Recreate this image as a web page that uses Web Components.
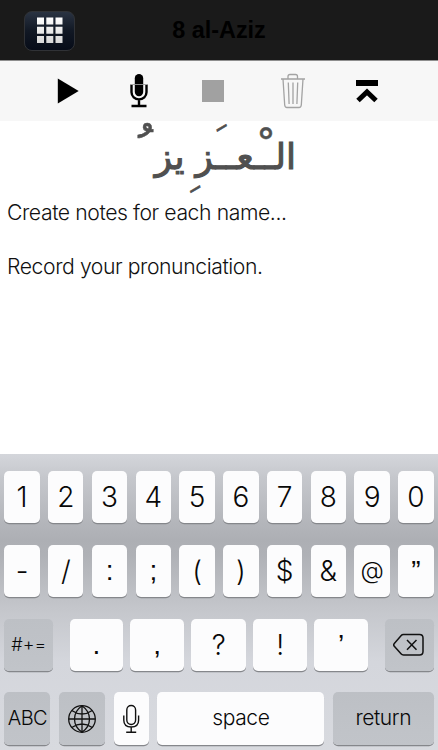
<!DOCTYPE html>
<html lang="en">
<head>
<meta charset="utf-8">
<title>8 al-Aziz</title>
<style>
html,body{margin:0;height:100%;overflow:hidden;background:#fff}
body{font-family:Inter,"Liberation Sans",sans-serif}
</style>
</head>
<body>
<name-app></name-app>
<script>
const define = (tag, html) => customElements.define(tag, class extends HTMLElement {
  constructor() {
    super();
    const t = document.createElement('template');
    t.innerHTML = html;
    this.attachShadow({mode: 'open'}).append(t.content.cloneNode(true));
  }
});

define('nav-header', `
<style>
:host{display:grid;grid-template-columns:100px 1fr 100px;align-items:center;height:60px;background:#1a1a1a;border-bottom:1px solid #8e8e8e;box-sizing:content-box}
.grid{margin-left:24px;width:49px;height:38px;border:1.5px solid #303236;border-radius:8px;background:linear-gradient(#2a3342,#111824 50%,#070c18);display:grid;place-items:center}
h1{margin:0;text-align:center;font:700 23.400px/61px "Liberation Sans",sans-serif;color:#000;white-space:nowrap}
</style>
<div class="grid"><svg width="28" height="28" viewBox="0 0 28 28"><defs><linearGradient id="g" x2="0" y2="1"><stop stop-color="#fff"/><stop offset="1" stop-color="#d8d8d8"/></linearGradient></defs><g fill="url(#g)"><path d="M1 .5h7v7H1zM10.300 .5h7v7h-7zM19.500 .5h7v7h-7zM1 9.800h7v7H1zM10.300 9.800h7v7h-7zM19.500 9.800h7v7h-7zM1 19h7v7H1zM10.300 19h7v7h-7zM19.500 19h7v7h-7z"/></g></svg></div>
<h1><slot></slot></h1>`);

define('audio-toolbar', `
<style>
:host{display:grid;grid-template-columns:32px 71.500px 70px 79.500px 79px 69.500px;height:59.500px;background:#f7f7f7;align-items:center;justify-items:center}
svg{display:block}
</style>
<span></span>
<svg width="22" height="26" viewBox="0 0 22 26"><path d="M.8 .5 21.700 13 .8 25.500z"/></svg>
<svg width="18" height="35" viewBox="0 0 18 35"><path d="M4.800 5.200a4.200 4.200 0 0 1 8.400 0V19a4.200 4.200 0 0 1-8.400 0z"/><path d="M1.500 12v7.300a7.500 7.100 0 0 0 15 0V12M9 26v7M1.500 33h15" fill="none" stroke="#000" stroke-width="2.400"/><path d="M0 11.500h18" stroke="#999" stroke-width=".9"/></svg>
<svg width="22" height="22" viewBox="0 0 22 22"><path fill="#a1a1a1" d="M0 0h22v22H0z"/></svg>
<svg width="26" height="36" viewBox="0 0 26 36" fill="none" stroke="#a3a3a3" stroke-width="1.300"><path d="M1 6h24M8 6V3.500Q8 1.500 10 1.500h5.500q2 0 2 2V6M3 6l1.700 26q.2 2.500 2.300 2.500h12q2.100 0 2.300-2.500L23 6M8.300 9.500l.8 21.500M13 9.500V31M17.700 9.500l-.8 21.500"/></svg>
<svg width="22" height="24" viewBox="0 0 22 24"><path d="M0 1h22v6H0z"/><path d="M2 21.500 11 13l9 8.500" fill="none" stroke="#000" stroke-width="5"/></svg>`);

define('arabic-name', `
<style>
:host{display:flex;gap:11px;position:relative;height:79px;margin-bottom:-27px;padding-right:142px;font:36px/72px "DejaVu Sans",sans-serif;color:#505050;white-space:nowrap;direction:rtl;-webkit-text-stroke:1.100px #505050}
i{position:absolute;font-style:normal;line-height:60px;font-size:44px;-webkit-text-stroke:.5px #505050}
.slant{font-size:38px;transform:rotate(-18deg)}
</style><span>الــعــز</span><span>يز</span>
<i style="left:255px;top:0">&nbsp;ْ</i><i class="slant" style="left:216px;top:-11px">&nbsp;َ</i><i class="slant" style="left:181px;top:24px">&nbsp;ِ</i><i style="left:132px;top:1px;font-size:54px">&nbsp;ُ</i>`);

define('note-text', `
<style>
:host{display:block;flex:1;padding:0 7px;font:300 21.200px/26.700px Inter,"Liberation Sans",sans-serif;letter-spacing:-.42px;color:#111;white-space:pre}
p{margin:0 0 26.700px}
</style><p>Create notes for each name...</p><p>Record your pronunciation.</p>`);

define('key-cap', `
<style>
:host{display:flex;align-items:center;justify-content:center;box-sizing:border-box;min-width:0;background:#fcfcfd;border-radius:5px;box-shadow:0 1.300px 0 #85878b;color:#080808;font-size:28px;font-weight:300;white-space:nowrap}
:host([dark]){background:linear-gradient(#bdc0c5,#c1c4c9)}
:host([small]){font-size:21px;letter-spacing:-.4px;line-height:24px;padding-bottom:2px}
:host([tiny]){font-size:18px}
:host([punct]){font-family:"Liberation Sans",sans-serif}
::slotted(svg){display:block}
</style><slot></slot>`);

define('key-row', `
<style>
:host{display:grid;height:52.300px;grid-template-columns:repeat(10,35.400px);column-gap:8.380px}
:host([kind=marks]){column-gap:7px;grid-template-columns:49px 62.600px 54.500px 54.500px 54.500px 53.500px 59px;justify-content:start}
:host([kind=bottom]){grid-template-columns:46.200px 46.200px 35.300px 166.800px 101px;column-gap:8.500px}
::slotted(.first){margin-left:9.600px}
::slotted(.last){margin-left:10px}
</style><slot></slot>`);

define('key-board', `
<style>
:host{display:flex;flex-direction:column;gap:21.500px;box-sizing:border-box;height:296px;padding:17px 4px 0 4.300px;background:linear-gradient(#d4d6db,#c5c7cc 8%,#adafb4 29%,#afb1b6 34%,#c5c7cc 53%,#d4d6dc 70%,#d8dadf)}
</style>
<key-row><key-cap>1</key-cap><key-cap>2</key-cap><key-cap>3</key-cap><key-cap>4</key-cap><key-cap>5</key-cap><key-cap>6</key-cap><key-cap>7</key-cap><key-cap>8</key-cap><key-cap>9</key-cap><key-cap>0</key-cap></key-row>
<key-row><key-cap>-</key-cap><key-cap>/</key-cap><key-cap punct>:</key-cap><key-cap punct>;</key-cap><key-cap>(</key-cap><key-cap>)</key-cap><key-cap>$</key-cap><key-cap>&amp;</key-cap><key-cap style="font-size:24px">@</key-cap><key-cap punct>”</key-cap></key-row>
<key-row kind="marks"><key-cap dark tiny>#+=</key-cap><key-cap punct class="first">.</key-cap><key-cap punct>,</key-cap><key-cap>?</key-cap><key-cap>!</key-cap><key-cap punct>’</key-cap><key-cap dark class="last"><svg width="32" height="24" viewBox="0 0 32 24" fill="none" stroke="#111" stroke-width="1.500" stroke-linejoin="round"><path d="M10.500 1.500h16q3.500 0 3.500 3.500v13.500q0 3.500-3.500 3.500h-16q-1.500 0-2.500-1.200L1.300 13.200q-1.200-1.400 0-2.800L8 2.700Q9 1.500 10.500 1.500zM14 7l9.500 9.800M23.500 7 14 16.800"/></svg></key-cap></key-row>
<key-row kind="bottom"><key-cap dark small style="font-size:20px;letter-spacing:-.6px">ABC</key-cap><key-cap dark><svg width="30" height="30" viewBox="0 0 30 30" fill="none" stroke="#111" stroke-width="1.300"><circle cx="15" cy="15" r="13.300"/><path d="M15 1.700v26.600M1.700 15h26.600M15 1.700c-10 7-10 19.600 0 26.600M15 1.700c10 7 10 19.600 0 26.600M4.700 6.500q10.300 7 20.600 0M4.700 23.500q10.300-7 20.600 0"/></svg></key-cap><key-cap><svg width="18" height="30" viewBox="0 0 18 30" fill="none" stroke="#111" stroke-width="1.400"><rect x="4.800" y="1.500" width="8.800" height="19" rx="4.400"/><path d="M1.800 11.500v4.800q0 6.700 7.400 6.700t7.400-6.700v-4.800M9.200 23v5M4.200 28.200h10"/></svg></key-cap><key-cap small>space</key-cap><key-cap dark small>return</key-cap></key-row>`);

define('name-app', `
<style>
:host{display:flex;flex-direction:column;width:438px;height:750px;background:#fff}
</style>
<nav-header>8 al-Aziz</nav-header>
<audio-toolbar></audio-toolbar>
<arabic-name lang="ar"></arabic-name>
<note-text></note-text>
<key-board></key-board>`);
</script>
</body>
</html>
